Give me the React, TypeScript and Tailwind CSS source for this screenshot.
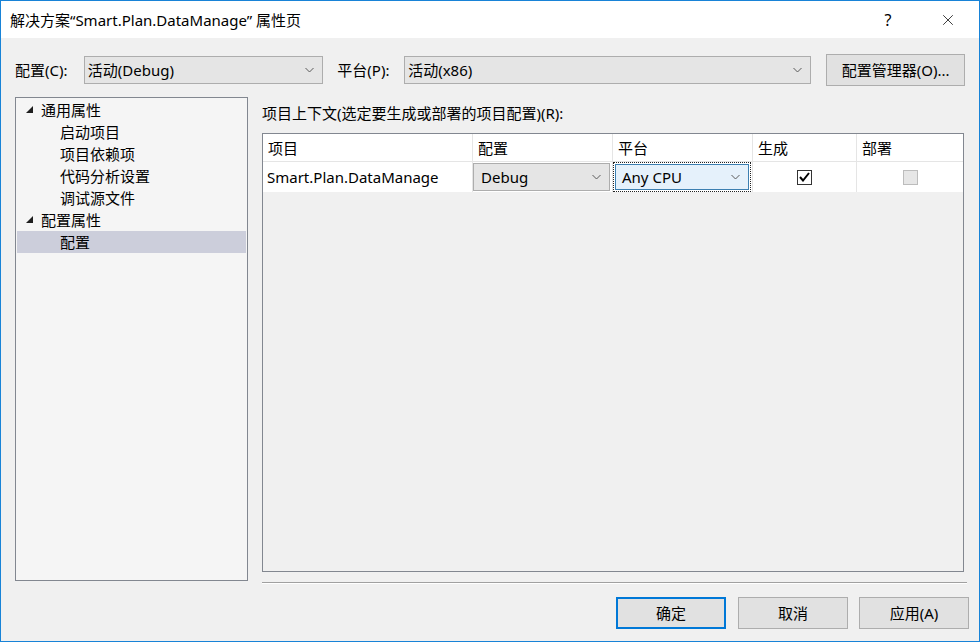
import { X } from "lucide-react";

const Chevron = () => (
  <svg width="9" height="6" viewBox="0 0 9 6" className="shrink-0">
    <polyline points="0.5,1 4.5,5 8.5,1" fill="none" stroke="#5a5a5a" strokeWidth="1" />
  </svg>
);

const Triangle = () => (
  <svg width="8" height="8" viewBox="0 0 8 8" className="shrink-0">
    <polygon points="7,0 7,7 0,7" fill="#1e1e1e" />
  </svg>
);

const treeRows = [
  { label: "通用属性", level: 0 },
  { label: "启动项目", level: 1 },
  { label: "项目依赖项", level: 1 },
  { label: "代码分析设置", level: 1 },
  { label: "调试源文件", level: 1 },
  { label: "配置属性", level: 0 },
  { label: "配置", level: 1, selected: true },
];

const App = () => {
  return (
    <div className="w-[980px] h-[642px] flex flex-col border border-[#1883d7] bg-[#f0f0f0] text-black text-[15px] leading-[20px] font-['Noto_Sans','Noto_Sans_CJK_SC',sans-serif] overflow-hidden">
      {/* Title bar */}
      <div className="h-[37px] bg-white flex items-center shrink-0">
        <span className="pl-[9px] flex-1">解决方案“Smart.Plan.DataManage” 属性页</span>
        <span className="w-[58px] text-center text-[16px] mr-[8px]">?</span>
        <div className="w-[46px] flex justify-center mr-[8px]">
          <X size={18} strokeWidth={1} color="#000" />
        </div>
      </div>

      {/* Body */}
      <div className="flex-1 flex flex-col px-[14px]">
        {/* Config / platform row */}
        <div className="mt-[16px] h-[32px] flex items-center">
          <span className="w-[69px]">配置(C):</span>
          <div className="w-[240px] h-[28px] bg-[#e5e5e5] border border-[#adadad] flex items-center pl-[3px] pr-[8px]">
            <span className="flex-1">活动(Debug)</span>
            <Chevron />
          </div>
          <span className="ml-[14px] w-[67px]">平台(P):</span>
          <div className="w-[408px] h-[28px] bg-[#e5e5e5] border border-[#adadad] flex items-center pl-[3px] pr-[8px]">
            <span className="flex-1">活动(x86)</span>
            <Chevron />
          </div>
          <div className="ml-[15px] w-[139px] h-[32px] bg-[#e1e1e1] border border-[#adadad] flex items-center justify-center">
            配置管理器(O)...
          </div>
        </div>

        {/* Main */}
        <div className="mt-[11px] flex items-start">
          {/* Tree */}
          <div className="w-[233px] h-[484px] bg-[#f5f5f5] border border-[#828790] p-px shrink-0">
            {treeRows.map((r) => (
              <div
                key={r.label}
                className={`h-[22px] flex items-center ${r.selected ? "bg-[#cccedb]" : ""}`}
              >
                {r.level === 0 ? (
                  <>
                    <span className="w-[24px] flex justify-end pr-[7px]">
                      <Triangle />
                    </span>
                    <span>{r.label}</span>
                  </>
                ) : (
                  <span className="pl-[43px]">{r.label}</span>
                )}
              </div>
            ))}
          </div>

          {/* Right column */}
          <div className="ml-[14px] flex-1 flex flex-col">
            <div className="h-[36px] flex items-start pt-[6px]">项目上下文(选定要生成或部署的项目配置)(R):</div>
            <div className="w-[702px] h-[439px] border border-[#828790] bg-[#f0f0f0] flex flex-col">
              {/* Header */}
              <div className="h-[28px] bg-white flex border-b border-[#e5e5e5]">
                <div className="w-[210px] pl-[5px] flex items-center border-r border-[#e5e5e5]">项目</div>
                <div className="w-[140px] pl-[5px] flex items-center border-r border-[#e5e5e5]">配置</div>
                <div className="w-[140px] pl-[5px] flex items-center border-r border-[#e5e5e5]">平台</div>
                <div className="w-[104px] pl-[5px] flex items-center border-r border-[#e5e5e5]">生成</div>
                <div className="flex-1 pl-[5px] flex items-center">部署</div>
              </div>
              {/* Data row */}
              <div className="h-[30px] bg-white flex">
                <div className="w-[210px] pl-[4px] flex items-center border-r border-[#e5e5e5]">Smart.Plan.DataManage</div>
                <div className="w-[140px] flex items-center border-r border-[#e5e5e5] py-[1px]">
                  <div className="w-[137px] h-[28px] bg-[#e5e5e5] border border-[#adadad] flex items-center pl-[7px] pr-[8px]">
                    <span className="flex-1">Debug</span>
                    <Chevron />
                  </div>
                </div>
                <div className="w-[140px] flex items-center border-r border-[#e5e5e5]">
                  <div className="w-[138px] h-[30px] border border-dotted border-[#222] p-px">
                    <div className="h-full bg-[#e5f1fb] border border-[#3c7fb1] flex items-center pl-[6px] pr-[8px]">
                      <span className="flex-1">Any CPU</span>
                      <Chevron />
                    </div>
                  </div>
                </div>
                <div className="w-[104px] flex items-center justify-center border-r border-[#e5e5e5]">
                  <div className="w-[15px] h-[15px] bg-white border border-[#333] flex items-center justify-center">
                    <svg width="11" height="10" viewBox="0 0 11 10">
                      <polyline points="1,5 4,8.5 10,1" fill="none" stroke="#000" strokeWidth="2" />
                    </svg>
                  </div>
                </div>
                <div className="flex-1 flex items-center justify-center">
                  <div className="w-[15px] h-[15px] bg-[#e6e6e6] border border-[#bcbcbc]" />
                </div>
              </div>
            </div>
            {/* Separator */}
            <div className="mt-[10px] w-[705px] h-[2px] border-t border-[#a0a0a0] border-b border-b-white" />
          </div>
        </div>

        {/* Buttons */}
        <div className="mt-[13px] flex justify-end mr-[-4px]">
          <div className="w-[110px] h-[32px] bg-[#e1e1e1] border-2 border-[#0078d7] flex items-center justify-center">确定</div>
          <div className="ml-[12px] w-[110px] h-[32px] bg-[#e1e1e1] border border-[#adadad] flex items-center justify-center">取消</div>
          <div className="ml-[11px] w-[110px] h-[32px] bg-[#e1e1e1] border border-[#adadad] flex items-center justify-center">应用(A)</div>
        </div>
      </div>
    </div>
  );
};

export default App;
